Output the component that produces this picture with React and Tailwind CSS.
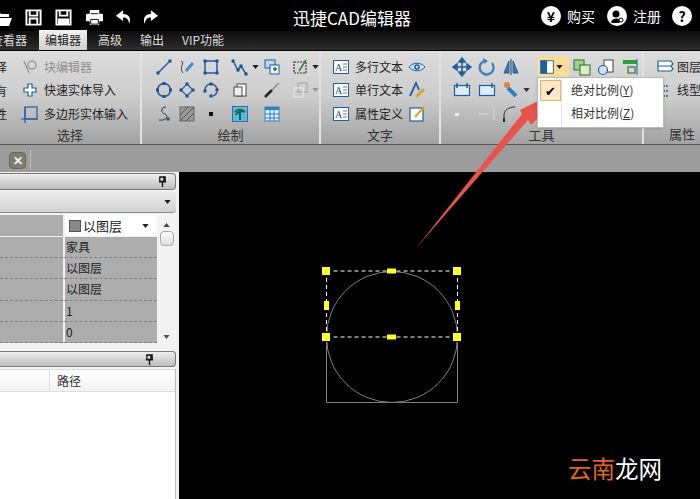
import React from "react";

const Ico = ({ children, className = "" }) => (
  <svg viewBox="0 0 20 20" className={`w-5 h-5 shrink-0 ${className}`} fill="none" stroke="#1f5f9e" strokeWidth="1.5">
    {children}
  </svg>
);

const Node = ({ x, y }) => <rect x={x - 1.5} y={y - 1.5} width="3" height="3" fill="#1f4f8e" stroke="none" />;

const TextIcon = ({ label }) => (
  <Ico>
    <rect x="2.5" y="3.5" width="15" height="13" fill="#fff" strokeWidth="1" />
    <text x="4" y="14" fontSize="10" fontFamily="Liberation Serif, serif" fill="#1f4f8e" stroke="none">{label}</text>
    <path d="M12 7h4M12 10h4M12 13h4" stroke="#777" strokeWidth="1" />
  </Ico>
);

const drawIcons = [
  <Ico key="a"><path d="M4 16 16 4" /><Node x={4} y={16} /><Node x={16} y={4} /></Ico>,
  <Ico key="b"><path d="M4 4c5 2-3 6 2 12" stroke="#444" strokeWidth="1" /><path d="m9 14 7-8" stroke="#4a8ad0" strokeWidth="3" /></Ico>,
  <Ico key="c"><rect x="4" y="4" width="12" height="12" /><Node x={4} y={4} /><Node x={16} y={4} /><Node x={4} y={16} /><Node x={16} y={16} /></Ico>,
  <Ico key="d"><path d="m3 4 5 9 3-4 5 8" /><Node x={3} y={4} /><Node x={8} y={13} /><Node x={11} y={9} /><Node x={16} y={17} /></Ico>,
  <Ico key="e"><rect x="3" y="3" width="10" height="8" fill="#bcd7ef" strokeWidth="1" /><rect x="8" y="8" width="9" height="9" fill="#eaf3fb" strokeWidth="1" /><path d="M11 12h4M13 10v4" stroke="#2a7a3a" /></Ico>,
  <Ico key="f"><rect x="4" y="5" width="12" height="11" strokeDasharray="2 1" strokeWidth="1.2" stroke="#333" /><path d="m9 14 7-11" stroke="#2e7d32" /></Ico>,
  <Ico key="g"><circle cx="10" cy="10" r="6.5" /><Node x={10} y={3.5} /><Node x={10} y={16.5} /><Node x={3.5} y={10} /><Node x={16.5} y={10} /></Ico>,
  <Ico key="h"><path d="M10 4 16 10 10 16 4 10Z" strokeWidth="1.2" /><Node x={10} y={4} /><Node x={10} y={16} /><Node x={4} y={10} /><Node x={16} y={10} /></Ico>,
  <Ico key="i"><path d="M4 11a6 6 0 0 1 12-2M16 12a6 6 0 0 1-4 4" /><Node x={4} y={11} /><Node x={10} y={4} /><Node x={16} y={10} /><Node x={10} y={16} /></Ico>,
  <Ico key="j"><rect x="7" y="4" width="9" height="12" fill="#fff" stroke="#444" strokeWidth="1" /><rect x="4" y="7" width="8" height="9" fill="#eee" stroke="#444" strokeWidth="1" /></Ico>,
  <Ico key="k"><path d="m3 17 7-7" stroke="#222" strokeWidth="2.5" /><path d="m10 10 7-7" stroke="#888" strokeWidth="1.5" /></Ico>,
  <Ico key="l" className="opacity-60"><rect x="8" y="3" width="9" height="9" stroke="#999" /><rect x="4" y="8" width="9" height="9" stroke="#eee" /></Ico>,
  <Ico key="m"><path d="M12 3C6 3 7 9 11 10c4 2 1 7-6 6" stroke="#333" strokeWidth="1" /><Node x={14} y={15} /></Ico>,
  <Ico key="n"><rect x="3" y="3" width="14" height="14" fill="#9a9a9a" stroke="#666" strokeWidth="1" /><path d="m3 11 8-8M3 17 17 3M9 17l8-8" stroke="#555" strokeWidth="1" /></Ico>,
  <Ico key="o"><rect x="8" y="8" width="4" height="4" fill="#111" stroke="none" /></Ico>,
  <Ico key="p"><rect x="2.5" y="2.5" width="15" height="15" fill="#58b8e8" stroke="#3a6a9a" strokeWidth="1" /><path d="M10 16V8M5 8c3-3 7-3 10 0M6 11c1-3 6-5 8-3" stroke="#0f6a3a" strokeWidth="2" /></Ico>,
  <Ico key="q"><rect x="3" y="3" width="14" height="14" fill="#dff0fb" stroke="#2b7fc4" strokeWidth="1" /><rect x="3" y="3" width="14" height="3" fill="#2b7fc4" stroke="none" /><path d="M3 10h14M3 14h14M8 6v11M12 6v11" stroke="#2b7fc4" strokeWidth="1" /></Ico>,
];

const Caret = ({ color = "#222" }) => (
  <svg viewBox="0 0 8 5" className="w-[7px] h-1 shrink-0">
    <path d="M0 0h8L4 5Z" fill={color} />
  </svg>
);

const Pin = () => (
  <svg viewBox="0 0 10 12" className="w-[9px] h-[11px]">
    <path d="M2 1h6v5H2zM1 6.5h8M5 7v5M6.5 1v5" stroke="#111" strokeWidth="1.4" fill="none" />
  </svg>
);

const Group = ({ label, className, children }) => (
  <div className={`flex flex-col shrink-0 border-r-2 border-[#e2e2e2] ${className}`}>
    <div className="h-[74px] pt-1">{children}</div>
    <div className="text-center text-[13px] leading-5 text-[#333]">{label}</div>
  </div>
);

const CmdRow = ({ icon, text, gray, tight }) => (
  <div className={`h-[23.5px] flex items-center whitespace-nowrap ${tight ? "gap-0.5" : "gap-1"} ${gray ? "text-[#8f8f8f]" : "text-[#222]"}`}>
    {icon}
    <span>{text}</span>
  </div>
);

const PropRow = ({ value }) => (
  <div className="h-[21.2px] flex border-b border-dashed border-[#808080]">
    <div className="w-[65px] border-r-2 border-[#f2f2f2]" />
    <div className="pl-px text-xs leading-[19px] text-[#222]">{value}</div>
  </div>
);

export default function App() {
  return (
    <div className="relative w-[700px] h-[499px] overflow-hidden bg-black text-xs [font-family:'Noto_Sans_CJK_SC','Liberation_Sans',sans-serif]">
      {/* title bar */}
      <div className="h-[31px] bg-black flex items-center text-white relative">
        <div className="flex items-center gap-[13px] mt-1 w-[293px] -ml-2 shrink-0">
          <svg viewBox="0 0 20 18" className="w-5 h-[18px]"><path d="M0 3h7l2 2h8v3H5L2 15H0zM5 9h15l-3 8H2z" fill="#fff" /></svg>
          <svg viewBox="0 0 18 18" className="w-[17px] h-[17px]"><path d="M1.500 1.500h15v15h-15zM5 2v5h8V2M5 16v-6h8v6" stroke="#fff" strokeWidth="2" fill="none" /></svg>
          <svg viewBox="0 0 18 18" className="w-[17px] h-[17px]"><path d="M1.500 1.500h15v15h-15zM5 2v5h8V2" stroke="#fff" strokeWidth="2" fill="none" /><rect x="3" y="10" width="12" height="6" fill="#fff" /></svg>
          <svg viewBox="0 0 20 18" className="w-[19px] h-[17px]"><path d="M5 5V1h10v4h3a1.500 1.500 0 0 1 1 1v7h-4v4H5v-4H1V6a1.500 1.500 0 0 1 1-1z" fill="#fff" /><path d="M6 11h8v5H6zM6 5h8" stroke="#000" fill="none" /></svg>
          <svg viewBox="0 0 20 18" className="w-[18px] h-[17px] -ml-[2px]"><path d="M9 1 1 7l8 6V9c4 0 6 2 7 7 2-6 0-11-7-11z" fill="#fff" /></svg>
          <svg viewBox="0 0 20 18" className="w-[18px] h-[17px] -ml-[5px]"><path d="m11 1 8 6-8 6V9C7 9 5 11 4 16 2 10 4 5 11 5z" fill="#fff" /></svg>
        </div>
        <div className="text-[17px] leading-none pt-1 ml-2 w-[248px] shrink-0">迅捷CAD编辑器</div>
        <div className="flex items-center text-sm whitespace-nowrap">
          <span className="w-5 h-5 rounded-full bg-white text-black flex items-center justify-center text-sm font-bold">¥</span>
          <span className="ml-1.5 text-sm w-[35px]">购买</span>
          <svg viewBox="0 0 20 20" className="w-5 h-5 ml-[5px]"><circle cx="10" cy="10" r="10" fill="#fff" /><circle cx="9" cy="8" r="3.500" fill="#000" /><path d="M4 16c1-4 8-5 10-1l-2 2H5z" fill="#000" /><circle cx="14" cy="14" r="2" fill="#fff" stroke="#000" /></svg>
          <span className="ml-1.5 text-sm w-[34px]">注册</span>
          <span className="w-5 h-5 ml-[5px] rounded-full bg-white text-black flex items-center justify-center text-sm font-bold">?</span>
        </div>
      </div>

      {/* tabs */}
      <div className="h-5 bg-gradient-to-b from-[#0d0d0d] to-[#2e2e2e] flex items-end border-b border-black text-[#ddd] relative">
        <div className="w-[39px] leading-5 -ml-[9px] whitespace-nowrap overflow-hidden shrink-0">查看器</div>
        <div className="ml-[9px] w-12 h-5 bg-gradient-to-b from-[#f2f2f2] to-[#cfcfcf] text-[#222] text-center leading-5">编辑器</div>
        <div className="ml-[11px] leading-5">高级</div>
        <div className="ml-[18px] leading-5">输出</div>
        <div className="ml-[18px] leading-5">VIP功能</div>
      </div>

      {/* ribbon */}
      <div className="h-[94px] flex bg-gradient-to-b from-[#dcdcdc] via-[#cccccc] to-[#a2a2a2] border-b border-[#555] overflow-hidden">
        <Group label="选择" className="w-[142px]">
          <div className="flex">
            <div className="w-[25px] -ml-[5px] text-[#222]">
              <div className="h-[23.5px] leading-[23px]">择</div>
              <div className="h-[23.5px] leading-[23px]">有</div>
              <div className="h-[23.5px] leading-[23px]">性</div>
            </div>
            <div>
              <CmdRow gray text="块编辑器" icon={<Ico><circle cx="12" cy="8" r="4" stroke="#999" /><path d="m4 4 5 12" stroke="#999" /></Ico>} />
              <CmdRow text="快速实体导入" icon={<Ico><path d="M8 4h4v4h4v4h-4v4H8v-4H4V8h4z" fill="#fff" strokeWidth="1.2" /></Ico>} />
              <CmdRow text="多边形实体输入" icon={<Ico><rect x="5" y="3" width="12" height="12" strokeWidth="1.2" /><path d="M1 15h17M5 19V3" strokeWidth="1.2" /></Ico>} />
            </div>
          </div>
        </Group>

        <Group label="绘制" className="w-[179px]">
          <div className="grid grid-cols-[23px_24px_29px_32px_28px_36px] grid-rows-[23.500px_23.500px_23.500px] pl-3 items-center">
            {drawIcons.map((icon, i) => (
              <div key={i} className="flex items-center gap-0.5">
                {icon}
                {(i === 3 || i === 5 || i === 11) && <Caret color={i === 11 ? "#999" : "#222"} />}
              </div>
            ))}
          </div>
        </Group>

        <Group label="文字" className="w-[120px]">
          <div className="flex pl-[10px]">
            <div>
              <CmdRow text="多行文本" icon={<TextIcon label="A" />} />
              <CmdRow text="单行文本" icon={<TextIcon label="A" />} />
              <CmdRow text="属性定义" icon={<TextIcon label="A" />} />
            </div>
            <div className="ml-1">
              <div className="h-[23.5px] flex items-center"><Ico><path d="M2 10c4-5 12-5 16 0-4 5-12 5-16 0Z" fill="#cfe2f5" strokeWidth="1" /><circle cx="10" cy="10" r="2" /></Ico></div>
              <div className="h-[23.5px] flex items-center"><Ico><path d="M3 16 9 3l3 7" strokeWidth="1.8" /><path d="m9 17 8-8" stroke="#d9a520" strokeWidth="2.5" /></Ico></div>
              <div className="h-[23.5px] flex items-center"><Ico><rect x="3" y="4" width="13" height="13" fill="#fff" strokeWidth="1.2" /><path d="m8 13 9-10" stroke="#d9a520" strokeWidth="2" /></Ico></div>
            </div>
          </div>
        </Group>

        <Group label="工具" className="w-[203px]">
          <div className="grid grid-cols-[25px_24px_37px_34px_24px_24px_24px] grid-rows-[23.500px_23.500px_23.500px] pl-[11px] items-center">
            <Ico><path d="M10 2v16M2 10h16" /><path d="m10 1 3 4H7zM10 19l3-4H7zM1 10l4-3v6zM19 10l-4-3v6z" fill="#1f5f9e" /></Ico>
            <Ico><path d="M15 6a7 7 0 1 1-8-2" strokeWidth="2.4" stroke="#3b82c4" /><path d="m6 1 1 6 4-3z" fill="#3b82c4" stroke="none" /></Ico>
            <Ico><path d="M8 4v12H3zM12 4v12h5z" fill="#3a78b8" strokeWidth="1" /><path d="M10 2v16" stroke="#333" strokeWidth="1" /></Ico>
            <div className="flex items-center w-[31px] h-[21px] bg-[#f8dc98]">
              <Ico className="w-[18px] h-[18px]"><rect x="3" y="3" width="14" height="14" fill="#fff" strokeWidth="1" /><rect x="3" y="3" width="7" height="14" fill="#1f5f9e" strokeWidth="0" /></Ico>
              <Caret />
            </div>
            <Ico><rect x="2" y="3" width="10" height="10" fill="#9ed48a" stroke="#2a6a2a" strokeWidth="1" /><rect x="8" y="8" width="10" height="10" fill="#d8efc8" stroke="#2a6a2a" strokeWidth="1" /></Ico>
            <Ico><rect x="8" y="3" width="9" height="12" fill="#fff" stroke="#444" strokeWidth="1" /><circle cx="7" cy="13" r="4.500" fill="#cfe2f5" strokeWidth="1.2" /></Ico>
            <Ico><rect x="3" y="3" width="14" height="4" fill="#2e9e3e" stroke="none" /><rect x="8" y="10" width="7" height="6" stroke="#2e7d32" strokeWidth="1.2" /><path d="M17 2v16" stroke="#1f5f9e" strokeWidth="1" /></Ico>

            <Ico><rect x="2.500" y="5.500" width="15" height="10" fill="#dcecf9" strokeWidth="1.2" /><path d="M5 3v5M15 3v5" strokeWidth="1.500" /></Ico>
            <Ico><rect x="2.500" y="5.500" width="15" height="10" fill="#dcecf9" strokeWidth="1.2" /><path d="M15 3v5" strokeWidth="1.500" /></Ico>
            <div className="flex items-center gap-0.5">
              <Ico><circle cx="6" cy="5" r="3" fill="#e8803a" stroke="none" /><path d="m7 8 8 8" stroke="#2b7fc4" strokeWidth="4" /></Ico>
              <Caret color="#333" />
            </div>
            <div className="col-span-4" />

            <Ico><rect x="3" y="9" width="4" height="3" fill="#eee" stroke="none" /><rect x="10" y="9" width="4" height="3" fill="#bbb" stroke="none" /></Ico>
            <Ico><path d="M2 10h9M17 4v12" stroke="#ccc" strokeWidth="2" /></Ico>
            <Ico><path d="M3 18V11C3 6 8 3 14 3" stroke="#333" strokeWidth="1" /><path d="M3 14v4" stroke="#111" /></Ico>
          </div>
        </Group>

        <Group label="属性" className="w-[78px] border-r-0">
          <div className="pl-[11px]">
            <CmdRow tight text="图层" icon={<Ico><path d="M3 4h13l2 3-2 2H3zM3 9h13l2 3-2 2H3z" fill="#fff" strokeWidth="1.2" /></Ico>} />
            <CmdRow tight text="线型" icon={<Ico><path d="M5 4v13M5 6h9M5 11h9M5 16h9" strokeDasharray="2 1" strokeWidth="1.4" /></Ico>} />
          </div>
        </Group>
      </div>

      {/* document tab strip */}
      <div className="h-[27px] bg-[#9c9c9c] flex items-center pl-[9px]">
        <div className="w-[17px] h-[17px] mt-[3px] rounded-sm bg-[#7f7f70] border border-[#666] flex items-center justify-center text-[#f4f4f4] text-xs font-bold leading-none">✕</div>
        <div className="ml-1 w-px h-[20px] mt-[3px] bg-[#bbb]" />
      </div>

      {/* body */}
      <div className="flex h-[327px]">
        <div className="w-[179px] shrink-0 bg-[#f3f3f3] flex flex-col pr-[3px]">
          <div className="h-[17px] mt-px rounded-r-sm bg-gradient-to-b from-[#eee] to-[#bdbdbd] border border-l-0 border-[#777] flex items-center justify-end pr-2"><Pin /></div>
          <div className="h-[22px] mt-px bg-gradient-to-b from-[#eee] to-[#d2d2d2] border-b border-[#888] flex items-center justify-end pr-[5px] rounded-r-sm"><Caret /></div>
          <div className="mt-0.5 flex h-[128px]">
            <div className="w-[157px] bg-[#adadad]">
              <div className="h-[22px] flex border-b border-[#eee]">
                <div className="w-[65px] border-r-2 border-[#f2f2f2]" />
                <div className="flex-1 bg-white flex items-center pl-1 pr-2 text-[13px] text-[#222]">
                  <span className="w-3 h-3 bg-[#888] border border-[#555]" />
                  <span className="ml-0.5">以图层</span>
                  <span className="ml-auto"><Caret /></span>
                </div>
              </div>
              <PropRow value="家具" />
              <PropRow value="以图层" />
              <PropRow value="以图层" />
              <PropRow value="1" />
              <PropRow value="0" />
            </div>
            <div className="flex-1 flex flex-col items-center pt-2 bg-[#f3f3f3]">
              <svg viewBox="0 0 8 5" className="w-[7px] h-1"><path d="M4 0l4 5H0Z" fill="#444" /></svg>
              <div className="w-[14px] h-[15px] mt-1 rounded-sm bg-gradient-to-b from-[#fff] to-[#ddd] border border-[#aaa]" />
              <div className="mt-auto mb-1"><Caret color="#555" /></div>
            </div>
          </div>
          <div className="h-[16px] mt-[8px] bg-gradient-to-b from-[#eee] to-[#bdbdbd] border border-l-0 border-[#777] rounded-r-sm flex items-center justify-end pr-[21px]"><Pin /></div>
          <div className="mt-[2px] flex-1 bg-white border-r border-[#bbb]">
            <div className="h-[23px] border-y border-[#ddd] bg-gradient-to-b from-white to-[#f3f3f3] flex">
              <div className="w-[50px] border-r border-[#ddd]" />
              <div className="pl-[7px] leading-[21px] text-[#333]">路径</div>
            </div>
          </div>
        </div>

        {/* canvas */}
        <div className="flex-1 bg-black relative">
          <svg viewBox="179 172 521 327" className="w-full h-full">
            <path d="M326.500 337v65.500h131V337" stroke="#808080" fill="none" />
            <circle cx="392" cy="337" r="65.500" stroke="#808080" fill="none" />
            <path d="M326.500 271h131M326.500 337h131M326.500 271v66M457.500 271v66" stroke="#fff" strokeDasharray="4 3" fill="none" />
            {[[326, 271], [457, 271], [326, 337], [457, 337]].map(([x, y]) => (
              <rect key={x + "-" + y} x={x - 4.500} y={y - 4.500} width="9" height="9" fill="#ffff20" stroke="#000050" />
            ))}
            <rect x="387" y="268.500" width="9" height="5" fill="#ffff20" />
            <rect x="387" y="334.500" width="9" height="5" fill="#ffff20" />
            <rect x="324" y="301" width="5" height="9" fill="#ffff20" />
            <rect x="455" y="301" width="5" height="9" fill="#ffff20" />
          </svg>
          <div className="absolute left-[389px] top-[280px] text-[23.5px] leading-8 whitespace-nowrap">
            <span className="text-[#e2661c]">云南</span><span className="text-white">龙网</span>
          </div>
        </div>
      </div>

      {/* red annotation arrow */}
      <svg viewBox="0 0 700 499" className="absolute inset-0 w-[700px] h-[499px] pointer-events-none">
        <path d="M417 247 522 114 520 110 540 100 537 119 531 125 528 120Z" fill="#e8534c" />
      </svg>

      {/* dropdown menu */}
      <div className="absolute left-[537px] top-[77px] w-[127px] h-[51px] bg-white border border-[#bbb] shadow flex">
        <div className="w-6 border-r border-[#e4e4e4]">
          <div className="m-0.5 w-[21px] h-[21px] bg-[#fde7c6] border border-[#e6b26a] flex items-center justify-center text-[13px] leading-none text-black">✔</div>
        </div>
        <div className="pl-[9px] text-[#333] leading-[23px]">
          <div>绝对比例(<u>Y</u>)</div>
          <div>相对比例(<u>Z</u>)</div>
        </div>
      </div>
    </div>
  );
}
